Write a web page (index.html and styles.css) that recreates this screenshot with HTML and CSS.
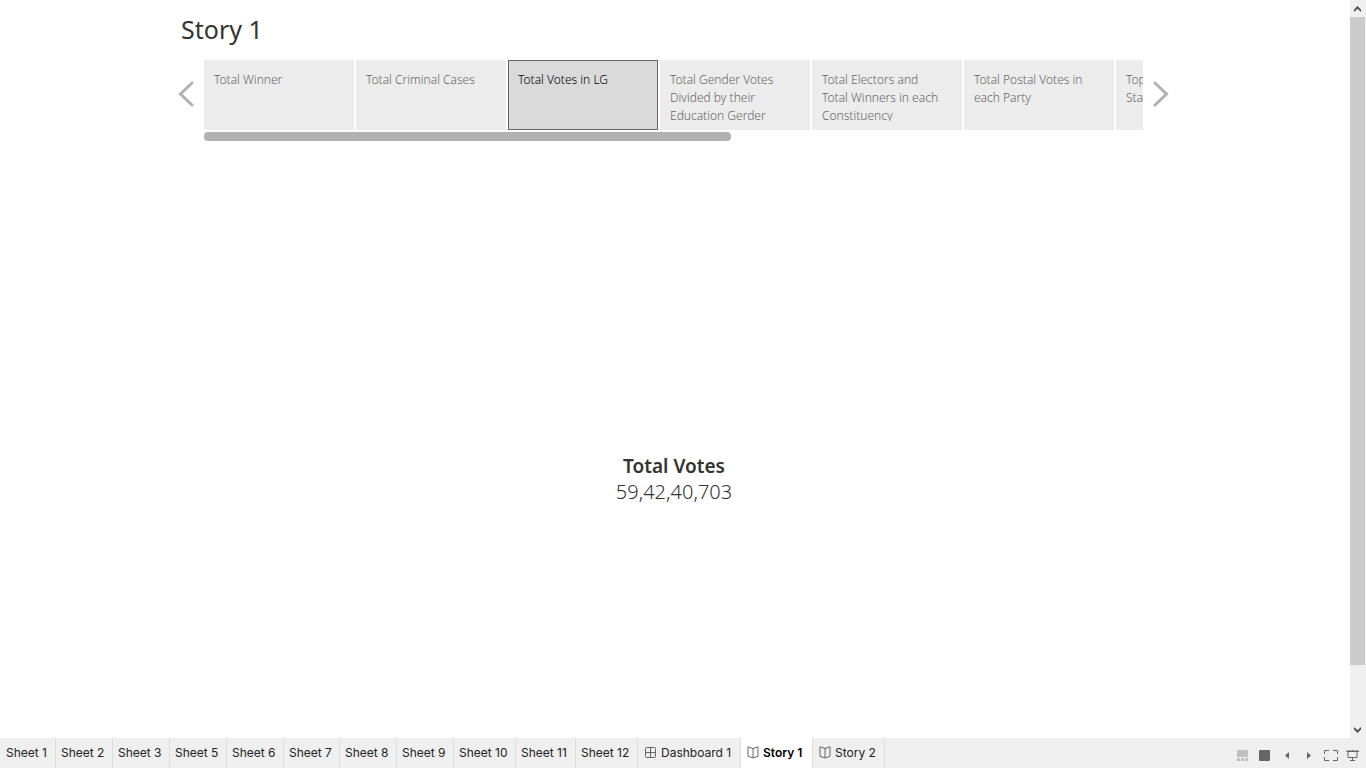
FILE: index.html
```html
<!DOCTYPE html>
<html lang="en">
<head>
<meta charset="utf-8">
<title>Story 1</title>
<link rel="stylesheet" href="styles.css">
</head>
<body>
<div class="workspace">
  <main class="story">
    <h1 class="story-title">Story 1</h1>
    <div class="navigator">
      <button class="nav-arrow" aria-label="Previous story point"><svg width="16" height="26" viewBox="0 0 16 26"><path d="M14 2 2.500 13 14 24"/></svg></button>
      <div class="points">
        <button class="point"><span class="caption">Total Winner</span></button>
        <button class="point"><span class="caption">Total Criminal Cases</span></button>
        <button class="point point-active" aria-current="true"><span class="caption">Total Votes in LG</span></button>
        <button class="point"><span class="caption">Total Gender Votes<br>Divided by their<br>Education Gerder</span></button>
        <button class="point"><span class="caption">Total Electors and<br>Total Winners in each<br>Constituency</span></button>
        <button class="point"><span class="caption">Total Postal Votes in<br>each Party</span></button>
        <button class="point"><span class="caption">Top<br>States</span></button>
      </div>
      <button class="nav-arrow" aria-label="Next story point"><svg width="16" height="26" viewBox="0 0 16 26"><path d="M2 2 13.500 13 2 24"/></svg></button>
      <div class="points-track"><div class="points-thumb"></div></div>
    </div>
    <section class="sheet">
      <h2 class="measure">Total Votes</h2>
      <p class="value">59,42,40,703</p>
    </section>
  </main>
  <div class="scrollbar">
    <button class="scroll-button" aria-label="Scroll up"><svg width="7" height="6" viewBox="0 0 7 6"><path d="M0 3.500 3.500 0 7 3.500V6L3.500 2.700 0 6z"/></svg></button>
    <div class="scroll-track"><div class="scroll-thumb"></div></div>
    <button class="scroll-button" aria-label="Scroll down"><svg width="7" height="6" viewBox="0 0 7 6"><path d="M0 0 3.500 3.300 7 0V2.500L3.500 6 0 2.500z"/></svg></button>
  </div>
</div>
<footer class="bottom-bar">
  <nav class="tabs">
    <button class="tab tab-first">Sheet 1</button>
    <button class="tab">Sheet 2</button>
    <button class="tab">Sheet 3</button>
    <button class="tab">Sheet 5</button>
    <button class="tab">Sheet 6</button>
    <button class="tab tab-narrow">Sheet 7</button>
    <button class="tab">Sheet 8</button>
    <button class="tab">Sheet 9</button>
    <button class="tab tab-wide">Sheet 10</button>
    <button class="tab tab-medium">Sheet 11</button>
    <button class="tab tab-wide">Sheet 12</button>
    <button class="tab tab-dashboard"><svg width="12" height="12" viewBox="0 0 12 12"><rect x=".5" y=".5" width="10" height="10" rx="1"/><path d="M5.500 1v10M1 5.500h10"/></svg>Dashboard 1</button>
    <button class="tab tab-story tab-active" aria-current="page"><svg width="12" height="13" viewBox="0 0 12 13"><path d="M6 2.500 1 .8v9.500L6 12l5-1.700V.8L6 2.500V12"/></svg>Story 1</button>
    <button class="tab tab-story"><svg width="12" height="13" viewBox="0 0 12 13"><path d="M6 2.500 1 .8v9.500L6 12l5-1.700V.8L6 2.500V12"/></svg>Story 2</button>
  </nav>
  <div class="tools">
    <button class="tool tool-muted" aria-label="Show filmstrip"><svg width="14" height="12" viewBox="0 0 14 12"><path d="M1 0h11v7H1zM1 8h3v3H1zM5 8h3v3H5zM9 8h3v3H9z"/></svg></button>
    <button class="tool" aria-label="Show tabs"><svg width="14" height="12" viewBox="0 0 14 12"><rect x="1" width="11" height="11" rx="1"/></svg></button>
    <button class="tool" aria-label="Previous sheet"><svg width="14" height="12" viewBox="0 0 14 12"><path d="M9 2v7L5 5.500z"/></svg></button>
    <button class="tool" aria-label="Next sheet"><svg width="14" height="12" viewBox="0 0 14 12"><path d="M5 2v7l4-3.500z"/></svg></button>
    <button class="tool" aria-label="Full screen"><svg class="outline" width="14" height="12" viewBox="0 0 14 12"><path d="M.5 4V.5H5M9 .5h4.500V4M13.500 7v3.500H9M5 10.500H.5V7"/></svg></button>
    <button class="tool" aria-label="Presentation mode"><svg class="outline" width="14" height="12" viewBox="0 0 14 12"><path d="M.5 1h12.500M.5 1.500h12.500M2 2v5.500h9V2M6.500 0v1M6.500 8v2.500M4 10.500h5"/></svg></button>
  </div>
</footer>
</body>
</html>
```
FILE: styles.css
```css
* { box-sizing: border-box; }

body {
  margin: 0;
  height: 100vh;
  display: flex;
  flex-direction: column;
  overflow: hidden;
  background: #fff;
  color: #333;
  font-family: "Noto Sans", "Open Sans", sans-serif;
}

button {
  margin: 0;
  padding: 0;
  border: 0;
  background: none;
  color: inherit;
  font: inherit;
}

svg { display: block; flex: none; }

.workspace { flex: 1; min-height: 0; display: flex; }

.story {
  flex: 1;
  min-width: 0;
  max-width: 1000px;
  margin: 0 auto;
  padding-top: 11px;
  display: flex;
  flex-direction: column;
}

.story-title {
  margin: 0;
  padding: 0 6px 13px;
  font-size: 25px;
  line-height: 36px;
  font-weight: 400;
}

.navigator {
  display: grid;
  grid-template-columns: 29px minmax(0, 1fr) 32px;
  row-gap: 2px;
}

.nav-arrow { display: flex; align-items: center; justify-content: center; padding: 0 8px 2px 0; }
.nav-arrow svg { fill: none; stroke: #b1b1b1; stroke-width: 3; stroke-linecap: round; }
.points + .nav-arrow { padding: 0 0 2px 4px; }

.points { display: flex; gap: 2px; overflow: hidden; }

.point {
  flex: none;
  width: 150px;
  height: 70px;
  padding: 10px 9px 8px;
  border: 1px solid #ececec;
  background: #ececec;
  color: #666;
  font-size: 12px;
  line-height: 18px;
  font-weight: 300;
  text-align: left;
}

.point-active { border-color: #666; background: #dadada; color: #000; }
.caption { display: block; height: 50px; overflow: hidden; white-space: nowrap; }

.points-track { grid-column: 2; }
.points-thumb { width: 527px; height: 9px; border-radius: 4px; background: #b1b1b1; }

.sheet {
  flex: 1;
  display: flex;
  flex-direction: column;
  align-items: center;
  justify-content: center;
  padding: 78px 2px 0 0;
}

.measure, .value { margin: 0; line-height: 26px; }
.measure { font-size: 19px; font-weight: 600; }
.value { font-size: 20px; font-weight: 300; }

.scrollbar {
  width: 16px;
  display: flex;
  flex-direction: column;
  padding-right: 1px;
  background: #f0f0f0;
}

.scroll-button { height: 17px; display: flex; align-items: center; justify-content: center; }
.scroll-button svg { fill: #505050; }
.scroll-track { flex: 1; }
.scroll-thumb { height: 92%; background: #cbcbcb; }

.bottom-bar { height: 30px; display: flex; justify-content: space-between; background: #efefef; }
.tabs { display: flex; }

.tab {
  width: 57px;
  padding: 0 0 1px 5px;
  display: flex;
  align-items: center;
  gap: 4px;
  border-right: 1px solid #dcdcdc;
  color: #222;
  font-family: Inter, sans-serif;
  font-size: 12px;
  white-space: nowrap;
}

.tab-first { width: 56px; padding-left: 6px; }
.tab-narrow { width: 56px; }
.tab-medium { width: 60px; }
.tab-wide { width: 62px; }
.tab-dashboard { width: 103px; padding-left: 7px; }
.tab-story { width: 72px; padding-left: 6px; }
.tab-active { background: #fff; color: #000; font-weight: 600; }
.tab svg { fill: none; stroke: #666; }

.tools { display: flex; align-items: center; gap: 8px; padding: 6px 6px 0 0; }
.tool svg { fill: #666; }
.tool-muted svg { fill: #c0c0c0; }
.tool .outline { fill: none; stroke: #666; }
```
